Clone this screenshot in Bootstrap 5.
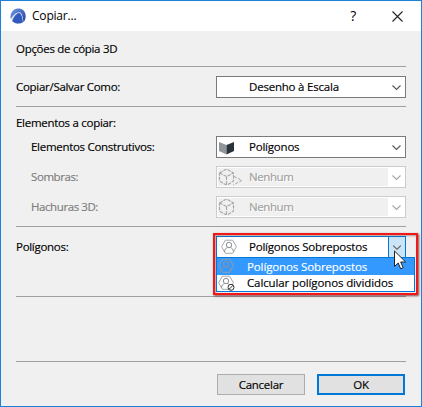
<!DOCTYPE html>
<html lang="pt">
<head>
<meta charset="utf-8">
<title>Copiar...</title>
<link href="https://cdn.jsdelivr.net/npm/bootstrap@5.3.0/dist/css/bootstrap.min.css" rel="stylesheet">
<style>
body{font:11.5px/16px "Open Sans","Noto Sans",sans-serif;letter-spacing:-.29px;color:#000;background:#f0f0f0;white-space:nowrap;-webkit-text-stroke:.15px currentColor}
.dlg{width:422px;height:407px;border:1px solid #1b82d8;background:#f0f0f0}
.titlebar{height:30px;padding:0 18px 0 9px}
.titlebar .caption{font-size:12px;margin-left:6px;letter-spacing:-.2px;line-height:30px;-webkit-text-stroke:0}
.help{font-size:14px;margin-right:36px;line-height:28px;-webkit-text-stroke:0}
.pane{padding:0 15px}
.heading{height:35px}
.rule{height:1px;background:#a0a0a0;width:390px}
.line{height:22px}
.line + .line{margin-top:8px}
.sub{padding-left:15px}
.combo{width:190px;height:22px;border:1px solid #7a7a7a;background:#fff;letter-spacing:-.21px}
.combo .ico{width:32px;height:18px;flex:none}
.combo .arrow{width:17px;height:20px;flex:none;color:#555}
.dim{color:#7c7c7c;letter-spacing:-.42px}
.combo.dim{border-color:#ccc;color:#a0a0a0;padding:1px 0 1px 1px}
.combo.dim .face{background:#f0f0f0;height:18px;text-shadow:1px 1px 0 #fff}
.combo.dim .ico{width:31px}
.combo.dim .arrow{color:#a5a5a5}
.combo.open{border-color:#0078d7}
.combo.open .arrow{background:#cce4f7;border-left:1px solid #0078d7}
.frame{left:213px;top:233px;width:205px;height:62px;border:2px solid #f01818;box-shadow:1px 1px 2px rgba(90,0,0,.7), inset 1px 1px 2px rgba(120,60,60,.5)}
.options{left:216px;top:257px;width:199px;height:35px;border:1px solid #0078d7;background:#fff;letter-spacing:-.12px}
.option{height:17px;line-height:17px}
.option + .option{height:16px;line-height:15px}
.option svg{width:30px;height:16px;flex:none}
.option.active{background:#3399ff;color:#fff}
.pointer{left:393px;top:250px}
.push{width:88px;height:21px;border:1px solid #adadad;border-radius:0;background:#e1e1e1;padding:0;font-size:11.5px;line-height:19px;color:#000;letter-spacing:-.25px}
.push.main{border:2px solid #0078d7;line-height:17px}
#scale{margin-top:9px}
#r2{margin-top:8px}
#head{margin:8px 0 5px}
#r3{margin-top:8px}
#poly{margin-top:9px}
#r4{margin-top:38px}
#r5{margin-top:64px}
#buttons{margin-top:12px;gap:12px;padding-right:1px}
</style>
</head>
<body>
<svg class="position-absolute" width="0" height="0">
<symbol id="chev" viewBox="0 0 17 20"><path d="M4.500 8.500l4 4 4-4" fill="none" stroke="currentColor" stroke-width="1.100"/></symbol>
<symbol id="hexa" viewBox="0 0 16 16"><path d="M4.300 1.200h7.400l3.700 6.500-3.700 6.600H4.300L.6 7.700z" fill="none" stroke="#9a9fa3" stroke-width=".9"/><circle cx="8" cy="6" r="2.700" fill="none" stroke="#8b9195"/><path d="M3.500 13c.2-3 1.500-3.900 3-4.300M12.500 13c-.2-3-1.500-3.900-3-4.300" fill="none" stroke="#8b9195"/></symbol>
<symbol id="cube" viewBox="0 0 26 18"><path d="M2.500 5l6-3.500h2L16.500 5v8l-5.500 3.500H8.500l-6-3.500zM2.500 5l7 3.500L16.500 5M9.500 8.500v8" fill="none" stroke="#a4a7aa" stroke-width="1.100" stroke-dasharray="3.500 1"/></symbol>
</svg>
<main class="dlg position-relative">
  <header class="titlebar bg-white d-flex align-items-center">
    <svg width="16" height="16" viewBox="0 0 16 16"><defs><linearGradient id="g" x1="0" y1="0" x2="1" y2="1"><stop offset="0" stop-color="#6f9ae6"/><stop offset="1" stop-color="#1d3da0"/></linearGradient></defs><circle cx="8" cy="8" r="7.700" fill="#dbe2ee"/><path d="M.8 11C-.5 5 4 .5 8.500.5 13 .5 16 4 15.600 9c-.2 2.300-.9 3.900-2.200 5.200C13 9 12 4.200 9 4.200 5.500 4.500 3 7.500.8 11z" fill="url(#g)"/><path d="M2.200 13C3.500 9.500 6 5.400 9 5c2.400.5 3.400 4.500 3.900 9.500C10 16.300 5 16 2.200 13z" fill="#3259bd"/></svg>
    <span class="caption">Copiar...</span>
    <span class="help ms-auto">?</span>
    <svg width="11" height="11" viewBox="0 0 11 11"><path d="M.5.5l10 10M10.500.5l-10 10" stroke="#222" stroke-width="1.100"/></svg>
  </header>
  <div class="pane">
    <div class="heading d-flex align-items-center">Opções de cópia 3D</div>
    <div class="rule"></div>
    <div class="line d-flex align-items-center justify-content-between" id="scale">
      <span>Copiar/Salvar Como:</span>
      <div class="combo d-flex align-items-center"><span class="ico"></span><span class="flex-grow-1">Desenho à Escala</span><svg class="arrow"><use href="#chev"/></svg></div>
    </div>
    <div class="rule" id="r2"></div>
    <div id="head">Elementos a copiar:</div>
    <div class="line sub d-flex align-items-center justify-content-between">
      <span>Elementos Construtivos:</span>
      <div class="combo d-flex align-items-center"><svg class="ico" viewBox="0 0 32 18"><path d="M2 4l7.500 3v9.500L2 13z" fill="#8f9598"/><path d="M17 4L9.500 7v9.500L17 13z" fill="#29333a"/></svg><span class="flex-grow-1">Polígonos</span><svg class="arrow"><use href="#chev"/></svg></div>
    </div>
    <div class="line sub d-flex align-items-center justify-content-between">
      <span class="dim">Sombras:</span>
      <div class="combo dim d-flex align-items-center"><span class="face d-flex align-items-center flex-grow-1"><svg class="ico" viewBox="0 0 31 18"><use href="#cube" x="-1" width="26" height="18"/><path d="M16 8.500l8 4-9 4.500" fill="none" stroke="#a4a7aa" stroke-dasharray="3 1.500"/></svg><span>Nenhum</span></span><svg class="arrow"><use href="#chev"/></svg></div>
    </div>
    <div class="line sub d-flex align-items-center justify-content-between">
      <span class="dim">Hachuras 3D:</span>
      <div class="combo dim d-flex align-items-center"><span class="face d-flex align-items-center flex-grow-1"><svg class="ico" viewBox="0 0 31 18"><use href="#cube" x="-1" width="26" height="18"/></svg><span>Nenhum</span></span><svg class="arrow"><use href="#chev"/></svg></div>
    </div>
    <div class="rule" id="r3"></div>
    <div class="line d-flex align-items-center justify-content-between" id="poly">
      <span>Polígonos:</span>
      <div class="combo open d-flex align-items-center"><svg class="ico" viewBox="0 0 32 18"><use href="#hexa" x="4" y="1" width="16" height="16"/></svg><span class="flex-grow-1">Polígonos Sobrepostos</span><svg class="arrow"><use href="#chev"/></svg></div>
    </div>
    <div class="rule" id="r4"></div>
    <div class="rule" id="r5"></div>
    <div class="d-flex justify-content-end" id="buttons">
      <button class="btn push" type="button">Cancelar</button>
      <button class="btn push main" type="button">OK</button>
    </div>
  </div>
</main>
<div class="frame position-absolute"></div>
<div class="options position-absolute">
  <div class="option active d-flex"><svg viewBox="0 0 30 16"><use href="#hexa" x="1" y="0" width="16" height="16"/></svg><span>Polígonos Sobrepostos</span></div>
  <div class="option d-flex"><svg viewBox="0 0 30 16"><use href="#hexa" x="1" y="0" width="16" height="16"/><circle cx="14" cy="12.300" r="3" fill="#fff" stroke="#333"/><path d="M11.800 14.500l4.400-4.400" stroke="#333"/></svg><span>Calcular polígonos divididos</span></div>
</div>
<svg class="pointer position-absolute" width="14" height="20" viewBox="0 0 14 20"><path d="M1.500 1v15.500l3.700-3.500 2.500 5.800 2.500-1.100-2.500-5.700h5z" fill="#fff" stroke="#222"/></svg>
<script src="https://cdn.jsdelivr.net/npm/bootstrap@5.3.0/dist/js/bootstrap.bundle.min.js"></script>
</body>
</html>
